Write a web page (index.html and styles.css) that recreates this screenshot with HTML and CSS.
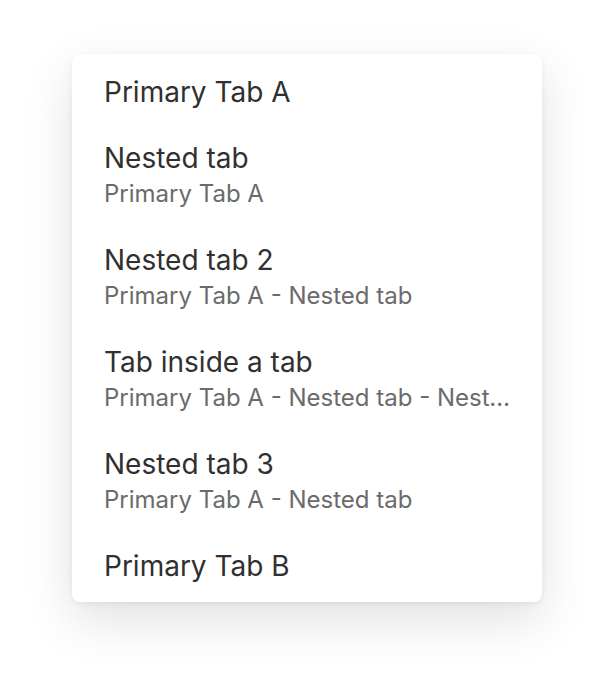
FILE: index.html
```html
<!DOCTYPE html>
<html lang="en">
<head>
<meta charset="utf-8">
<title>Tabs menu</title>
<link rel="stylesheet" href="styles.css">
</head>
<body>
<div class="page">
  <ul class="menu">
    <li class="item"><span class="title">Primary Tab A</span></li>
    <li class="item"><span class="title">Nested tab</span><span class="path">Primary Tab A</span></li>
    <li class="item"><span class="title">Nested tab 2</span><span class="path">Primary Tab A - Nested tab</span></li>
    <li class="item"><span class="title">Tab inside a tab</span><span class="path">Primary Tab A - Nested tab - Nested tab 2</span></li>
    <li class="item"><span class="title">Nested tab 3</span><span class="path">Primary Tab A - Nested tab</span></li>
    <li class="item"><span class="title">Primary Tab B</span></li>
  </ul>
</div>
</body>
</html>
```
FILE: styles.css
```css
html, body {
  margin: 0;
  padding: 0;
  background: #ffffff;
  height: 100%;
}
body {
  font-family: Inter, "Noto Sans", "Liberation Sans", sans-serif;
}
.page {
  display: flex;
  justify-content: center;
  align-items: flex-start;
  padding-top: 54px;
  min-height: 100%;
  box-sizing: border-box;
  overflow: hidden;
}
.menu {
  list-style: none;
  margin: 0;
  padding: 5px 0 3px;
  width: 470px;
  box-sizing: border-box;
  background: #ffffff;
  border-radius: 8px;
  box-shadow: 0 2px 6px rgba(0, 0, 0, 0.06), 0 18px 50px rgba(0, 0, 0, 0.12);
}
.item {
  display: flex;
  flex-direction: column;
  padding: 15px 24px 15px 32px;
  min-width: 0;
}
.title {
  font-size: 28px;
  line-height: 36px;
  color: #303030;
  white-space: nowrap;
  overflow: hidden;
  text-overflow: ellipsis;
}
.path {
  font-size: 24px;
  line-height: 36px;
  color: #6b6b6b;
  white-space: nowrap;
  overflow: hidden;
  text-overflow: ellipsis;
}
```
